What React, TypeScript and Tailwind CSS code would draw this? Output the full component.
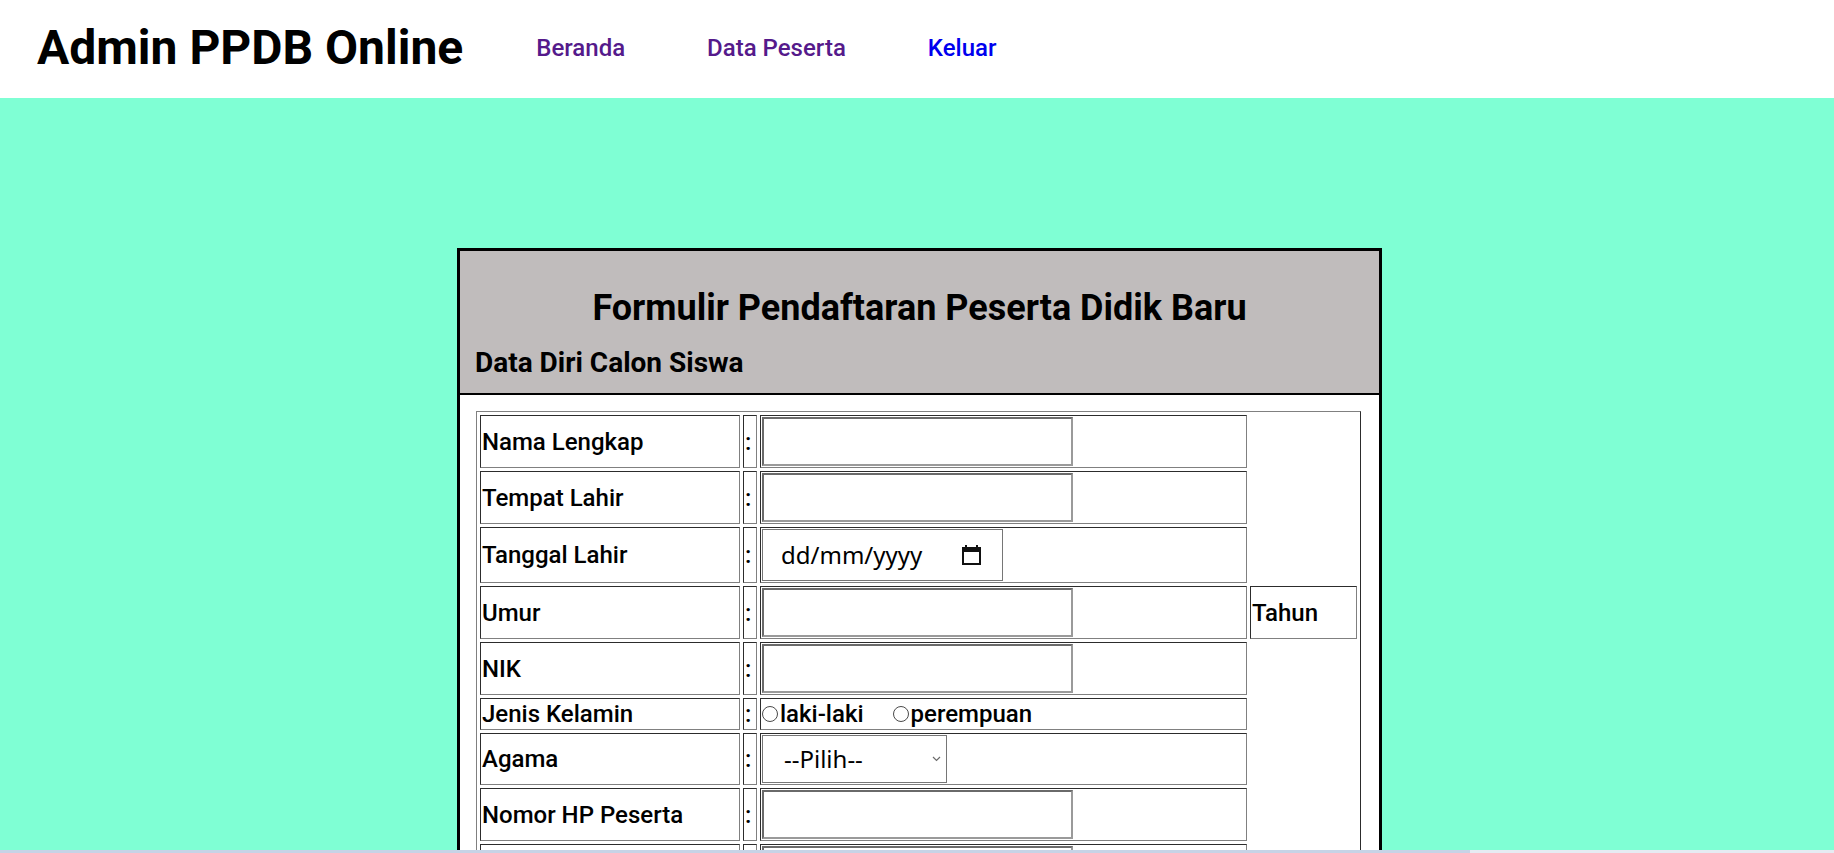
import React from 'react';

const cell = 'border border-[#808080] [border-style:inset] p-[1px]';
const textInput =
  'block h-[49px] w-[311px] border-2 border-solid border-t-[#6a6a6a] border-l-[#6a6a6a] border-r-[#9a9a9a] border-b-[#9a9a9a] bg-white outline-none';

const Row: React.FC<{ label: string; children: React.ReactNode; extra?: React.ReactNode }> = ({
  label,
  children,
  extra,
}) => (
  <tr>
    <td className={cell}>{label}</td>
    <td className={cell}>:</td>
    <td className={cell}>{children}</td>
    {extra}
  </tr>
);

const CalendarIcon = () => (
  <svg width="19" height="20" viewBox="0 0 19 20" className="ml-auto">
    <rect x="3" y="0" width="2" height="4" fill="#111" />
    <rect x="14" y="0" width="2" height="4" fill="#111" />
    <rect x="1" y="3" width="17" height="16" fill="none" stroke="#111" strokeWidth="2" />
    <rect x="1" y="3" width="17" height="4" fill="#111" />
  </svg>
);

const Radio: React.FC<{ name: string; label: string }> = ({ name, label }) => (
  <label className="flex items-center">
    <input
      type="radio"
      name={name}
      className="mr-[2px] h-[16px] w-[16px] appearance-none rounded-full border border-[#4a4a4a] bg-white"
    />
    <span>{label}</span>
  </label>
);

export default function App() {
  return (
    <div className="min-h-screen bg-[#7fffd4] font-['Roboto',sans-serif] text-[24px] leading-[28px] font-medium text-black">
      <header className="flex h-[98px] items-center bg-white pl-[37px] pb-[3px]">
        <h1 className="text-[48px] font-bold leading-[56px]">Admin PPDB Online</h1>
        <nav className="ml-[73px] flex gap-[82px] text-[24px]">
          <a href="#" className="text-[#551a8b]">Beranda</a>
          <a href="#" className="text-[#551a8b]">Data Peserta</a>
          <a href="#" className="text-[#0000ee]">Keluar</a>
        </nav>
      </header>

      <main className="pt-[150px] pb-[60px]">
        <div className="ml-[457px] w-[925px] border-[3px] border-black">
          <div className="border-b-2 border-black bg-[#c0bcbc] pt-[36px] pb-[14px]">
            <h2 className="text-center text-[36px] font-bold leading-[42px]">
              Formulir Pendaftaran Peserta Didik Baru
            </h2>
            <h3 className="mt-[17px] pl-[15px] text-[28px] font-bold leading-[33px]">
              Data Diri Calon Siswa
            </h3>
          </div>

          <div className="bg-white pt-[16px] pl-[16px] pb-[20px]">
            <table className="w-[885px] table-fixed border-separate border-spacing-[3px] border border-[#808080] [border-style:outset]">
              <colgroup>
                <col className="w-[260px]" />
                <col className="w-[14px]" />
                <col className="w-[487px]" />
                <col className="w-[107px]" />
              </colgroup>
              <tbody>
                <Row label="Nama Lengkap">
                  <input type="text" className={textInput} />
                </Row>
                <Row label="Tempat Lahir">
                  <input type="text" className={textInput} />
                </Row>
                <Row label="Tanggal Lahir">
                  <div className="flex h-[52px] w-[241px] items-center border border-[#767676] bg-white pl-[18px] pr-[21px] font-['Noto_Sans',sans-serif] text-[24px] font-normal">
                    <span>dd/mm/yyyy</span>
                    <CalendarIcon />
                  </div>
                </Row>
                <Row label="Umur" extra={<td className={cell}>Tahun</td>}>
                  <input type="text" className={textInput} />
                </Row>
                <Row label="NIK">
                  <input type="text" className={textInput} />
                </Row>
                <Row label="Jenis Kelamin">
                  <div className="flex items-center gap-[29px]">
                    <Radio name="jk" label="laki-laki" />
                    <Radio name="jk" label="perempuan" />
                  </div>
                </Row>
                <Row label="Agama">
                  <div className="relative h-[48px] w-[185px]">
                    <select className="h-full w-full appearance-none border border-[#767676] bg-white pl-[21px] font-['Noto_Sans',sans-serif] text-[24px] font-normal text-black">
                      <option>--Pilih--</option>
                      <option>Islam</option>
                      <option>Kristen</option>
                      <option>Katolik</option>
                      <option>Hindu</option>
                      <option>Buddha</option>
                    </select>
                    <svg
                      width="9"
                      height="6"
                      viewBox="0 0 9 6"
                      className="pointer-events-none absolute top-[21px] right-[6px]"
                    >
                      <path d="M1 1l3.5 3.5L8 1" fill="none" stroke="#6b6b6b" strokeWidth="1.2" />
                    </svg>
                  </div>
                </Row>
                <Row label="Nomor HP Peserta">
                  <input type="text" className={textInput} />
                </Row>
                <Row label="Asal Sekolah">
                  <input type="text" className={textInput} />
                </Row>
                <Row label="Alamat">
                  <input type="text" className={textInput} />
                </Row>
                <Row label="Nama Orang Tua">
                  <input type="text" className={textInput} />
                </Row>
              </tbody>
            </table>
          </div>
        </div>
      </main>

      <div className="fixed bottom-0 left-0 flex h-[3px] w-full">
        <div className="w-[1470px] bg-[#c7d3e6]" />
        <div className="flex-1 bg-[#e6ebf2]" />
      </div>
    </div>
  );
}
